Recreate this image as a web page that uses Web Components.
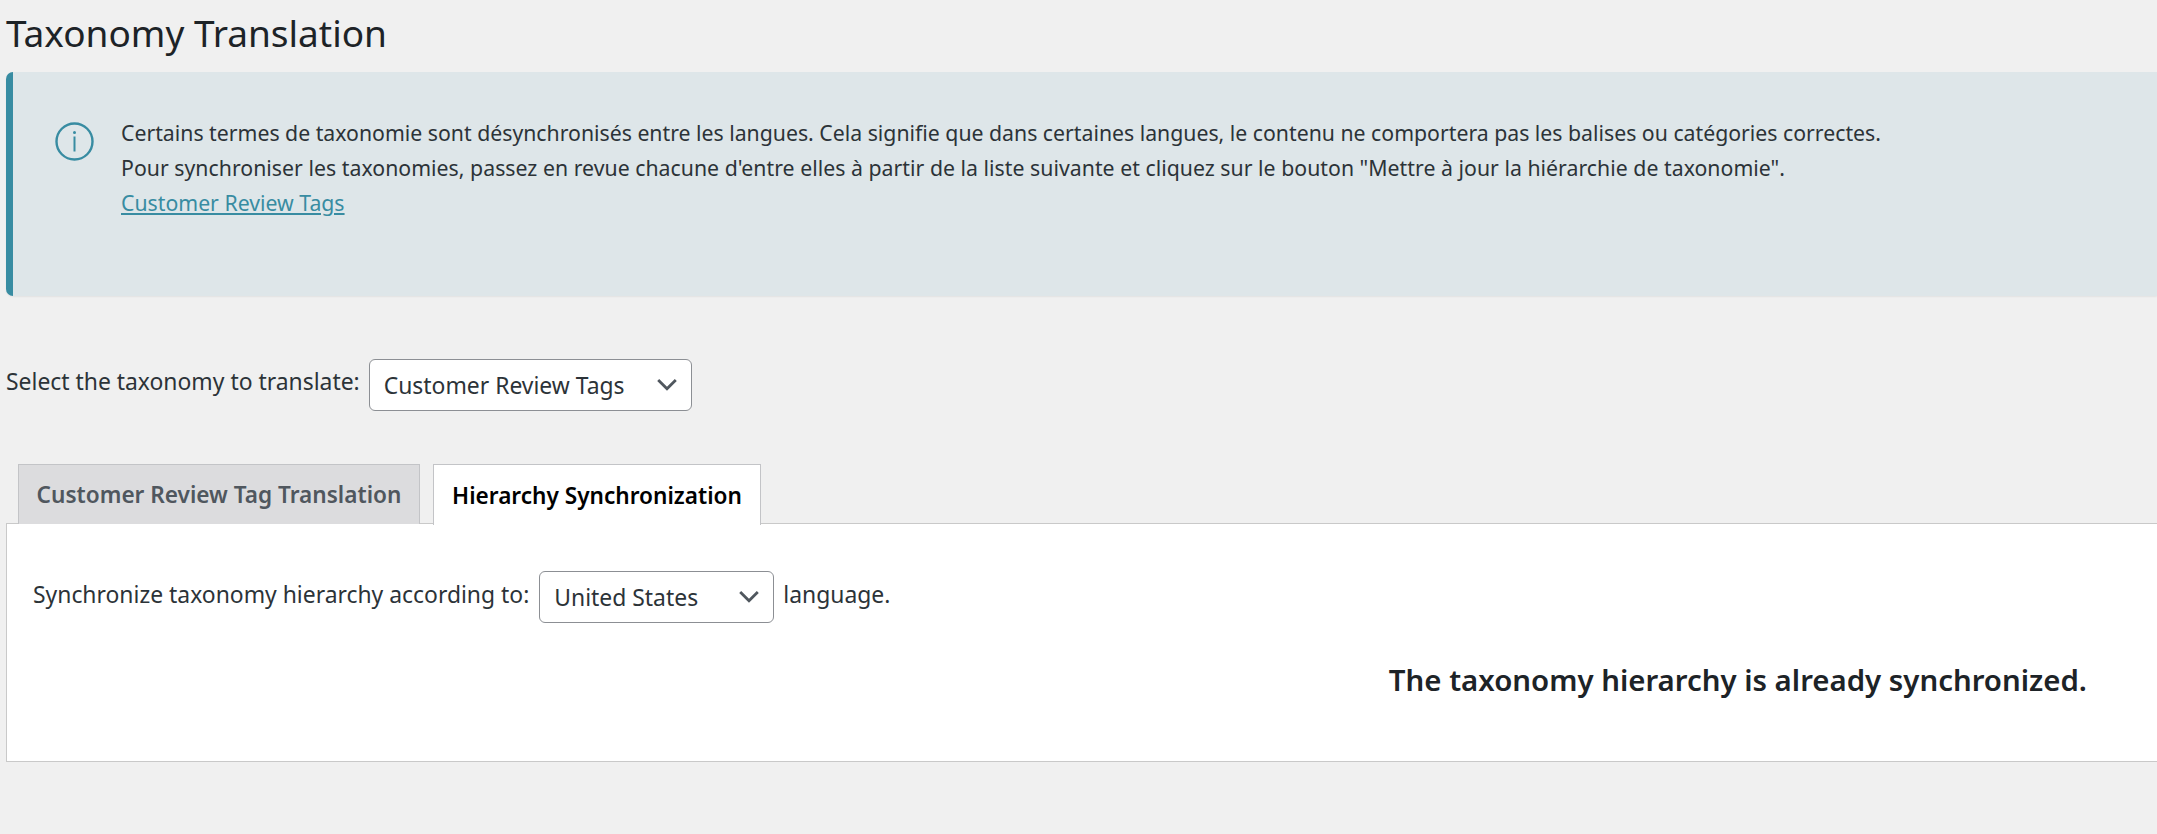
<!DOCTYPE html>
<html lang="en"><head><meta charset="utf-8"><title>Taxonomy Translation</title>
<style>
html,body{margin:0;padding:0;background:#f0f0f0;overflow:hidden;height:834px}
body{font-family:"Noto Sans","Liberation Sans",sans-serif;color:#2c3338}
</style></head><body>
<tax-page></tax-page>
<template id="t-page"><style>
:host{display:block;width:2157px;padding-left:6px;box-sizing:border-box}
h1{margin:0;padding-top:10px;height:72px;box-sizing:border-box;font-weight:400;font-size:37px;line-height:46px;color:#1d2327}
.row{display:flex;align-items:flex-start;height:52px;margin-top:63px;font-size:22.9px}
.row span{line-height:52px;margin-top:-3px;margin-right:9px}
.tabs{display:flex;gap:13px;padding-left:12px;margin-top:53px;position:relative;z-index:1}
.panel{background:#fff;border:1px solid #c9c9c9;border-right:0;height:239px;box-sizing:border-box;padding:47px 0 0 26px;margin-top:-1px;font-size:22.9px}
.sync{display:flex;align-items:flex-start;height:52px}
.sync span{line-height:52px;margin-top:-2px}
.sync span:first-child{margin-right:10px}
.sync span:last-child{margin-left:9px}
h3{margin:0;font-size:29.4px;font-weight:600;color:#1d2327;line-height:40px;text-align:right;padding-right:70px;margin-top:37px}
.l2{letter-spacing:.03px}
</style>
<h1>Taxonomy Translation</h1>
<tax-notice>Certains termes de taxonomie sont désynchronisés entre les langues. Cela signifie que dans certaines langues, le contenu ne comportera pas les balises ou catégories correctes.<br><span class="l2">Pour synchroniser les taxonomies, passez en revue chacune d'entre elles à partir de la liste suivante et cliquez sur le bouton "Mettre à jour la hiérarchie de taxonomie".</span><br><a slot="link">Customer Review Tags</a></tax-notice>
<div class="row"><span>Select the taxonomy to translate:</span><tax-select style="width:323px">Customer Review Tags</tax-select></div>
<div class="tabs"><tax-tab style="width:402px">Customer Review Tag Translation</tax-tab><tax-tab active style="width:328px">Hierarchy Synchronization</tax-tab></div>
<div class="panel">
<div class="sync"><span>Synchronize taxonomy hierarchy according to:</span><tax-select style="width:235px">United States</tax-select><span>language.</span></div>
<h3>The taxonomy hierarchy is already synchronized.</h3>
</div>
</template>
<script>
class Base extends HTMLElement{
  constructor(html){super();this.attachShadow({mode:'open'}).innerHTML=html;}
}
customElements.define('tax-notice',class extends Base{constructor(){super(`<style>
:host{display:flex;height:224px;box-sizing:border-box;background:#dee6e9;border-left:7px solid #388ca2;border-radius:7px 0 0 7px;box-shadow:0 1px 2px rgba(0,0,0,.06);padding:43px 0 0 42px;font-size:21.25px;line-height:35px;color:#2c3338}
svg{flex:none;width:39px;height:39px;margin:7px 27px 0 0}
::slotted(a){color:#388ca2;text-decoration:underline}
.t{white-space:nowrap}
</style><svg viewBox="0 0 39 39"><circle cx="19.5" cy="19.5" r="18" fill="none" stroke="#388ca2" stroke-width="2.4"/><rect x="18.5" y="14.5" width="2" height="15" fill="#388ca2"/><circle cx="19.5" cy="10.6" r="1.5" fill="#388ca2"/></svg><div class="t"><slot></slot><slot name="link"></slot></div>`);}});
customElements.define('tax-select',class extends Base{constructor(){super(`<style>
:host{display:flex;align-items:center;justify-content:space-between;flex:none;height:52px;box-sizing:border-box;background:#fff;border:1.5px solid #8c8f94;border-radius:6px;padding:0 14px;font-size:22.9px;color:#2c3338;line-height:52px}
.v{padding-top:2px}
svg{width:20px;height:14px;flex:none}
</style><span class="v"><slot></slot></span><svg viewBox="0 0 20 14"><path d="M1.2 2l8.8 8.8L18.8 2" fill="none" stroke="#50575e" stroke-width="2.8"/></svg>`);}});
customElements.define('tax-tab',class extends Base{constructor(){super(`<style>
:host{display:flex;align-items:center;justify-content:center;box-sizing:border-box;height:60px;background:#dcdcde;border:1px solid #c3c4c7;border-bottom:0;font-size:22.6px;font-weight:600;color:#50575e;margin-bottom:0}
:host([active]){background:#fff;color:#000;height:61px;margin-bottom:-1px}
</style><slot></slot>`);}});
customElements.define('tax-page',class extends Base{constructor(){super('');this.shadowRoot.appendChild(document.getElementById('t-page').content.cloneNode(true));}});
</script>
</body></html>
